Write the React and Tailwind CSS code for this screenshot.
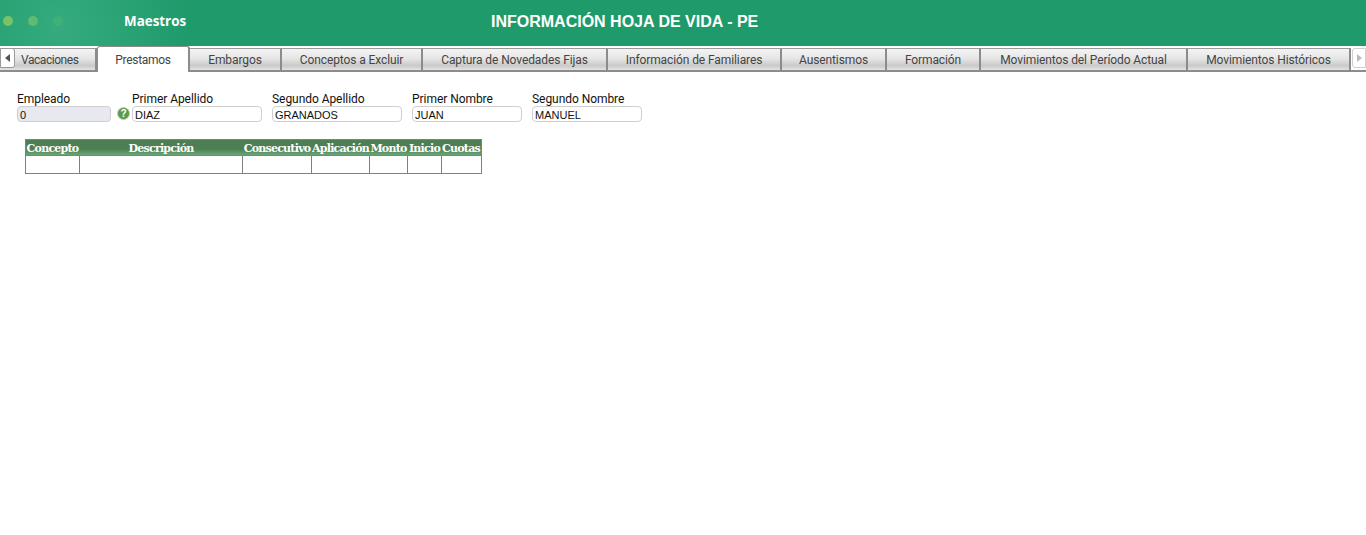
import React from 'react';

const tabs = [
  { name: 'Vacaciones', width: 'w-[97px]', pad: 'pl-[21px] justify-start', track: 'tracking-[-0.45px]' },
  { name: 'Prestamos', width: 'w-[93px]', active: true, track: 'tracking-[-0.3px]' },
  { name: 'Embargos', width: 'w-[92px]', track: 'tracking-[-0.1px]' },
  { name: 'Conceptos a Excluir', width: 'w-[141px]', track: 'tracking-[-0.1px]' },
  { name: 'Captura de Novedades Fijas', width: 'w-[185px]', track: 'tracking-[-0.1px]' },
  { name: 'Información de Familiares', width: 'w-[174px]', track: 'tracking-[-0.1px]' },
  { name: 'Ausentismos', width: 'w-[105px]', track: 'tracking-[-0.1px]' },
  { name: 'Formación', width: 'w-[94px]', track: 'tracking-[-0.1px]' },
  { name: 'Movimientos del Período Actual', width: 'w-[207px]', track: 'tracking-[-0.1px]' },
  { name: 'Movimientos Históricos', width: 'w-[163px]', track: 'tracking-[-0.1px]' },
];

const fields = [
  { label: 'Primer Apellido', value: 'DIAZ', width: 'w-[130px]' },
  { label: 'Segundo Apellido', value: 'GRANADOS', width: 'w-[130px]' },
  { label: 'Primer Nombre', value: 'JUAN', width: 'w-[110px]' },
  { label: 'Segundo Nombre', value: 'MANUEL', width: 'w-[110px]' },
];

const columns = [
  { name: 'Concepto', width: 'w-[54px]' },
  { name: 'Descripción', width: 'w-[163px]' },
  { name: 'Consecutivo', width: 'w-[69px]' },
  { name: 'Aplicación', width: 'w-[58px]' },
  { name: 'Monto', width: 'w-[38px]' },
  { name: 'Inicio', width: 'w-[34px]' },
  { name: 'Cuotas', width: 'w-[39px]' },
];

const Field = ({ label, value, width, disabled }) => (
  <div className={`${width} flex flex-col`}>
    <label className="h-[14px] text-[12px] leading-[14px] tracking-[-0.05px] text-[#111] font-['Roboto',sans-serif] whitespace-nowrap">{label}</label>
    <div className={`h-[16px] rounded-[4px] border border-[#cfcfcf] pl-[2px] pt-px text-[11px] leading-[15px] text-[#111] font-['Liberation_Sans',sans-serif] ${disabled ? 'bg-[#e8e8f0]' : 'bg-white'}`}>
      {value}
    </div>
  </div>
);

const App = () => {
  return (
    <div className="w-[1366px] h-[535px] bg-white overflow-hidden">
      {/* Header */}
      <div className="h-[46px] flex items-center bg-[radial-gradient(circle_at_60px_25px,#35ab7e_0,#1f9a6b_130px)]">
        <div className="flex gap-[15px] pl-[3px] pb-[5px]">
          <span className="w-[10px] h-[10px] rounded-full bg-[#79c267]" />
          <span className="w-[10px] h-[10px] rounded-full bg-[#5ebb6f]" />
          <span className="w-[10px] h-[10px] rounded-full bg-[#3fb077]" />
        </div>
        <div className="ml-[61px] w-[100px] pb-[4px] text-[13.4px] font-bold text-white font-['Open_Sans',sans-serif]">Maestros</div>
        <div className="ml-[267px] pb-[3px] text-[16px] font-bold text-white font-['Liberation_Sans',sans-serif] whitespace-nowrap">INFORMACIÓN HOJA DE VIDA - PE</div>
      </div>

      {/* Tabs */}
      <div className="relative h-[26px] flex items-start border-b-2 border-[#8c8c8c]">
        <div className="absolute left-0 top-[2px] z-10 w-[15px] h-[20px] flex items-center justify-center rounded-r-[3px] border border-[#9a9a9a] bg-white">
          <svg width="6" height="8" viewBox="0 0 6 8"><path d="M5 0 L0 4 L5 8 Z" fill="#555" /></svg>
        </div>
        {tabs.map((tab) => (
          <div
            key={tab.name}
            className={`${tab.width} ${tab.track} shrink-0 flex items-center text-[12px] text-[#444] font-['Roboto',sans-serif] whitespace-nowrap border-r-2 border-[#8c8c8c] ${tab.pad || 'justify-center'} ${
              tab.active
                ? 'relative z-10 h-[26px] pt-px bg-white rounded-t-[3px] border-t border-l'
                : 'h-[22px] mt-[2px] pt-px border-t border-t-[#999] bg-[linear-gradient(#f4f4f4,#e6e6e6_45%,#c9c9c9_80%,#e4e4e4)]'
            }`}
          >
            {tab.name}
          </div>
        ))}
        <div className="ml-px mt-[2px] w-[15px] h-[20px] flex items-center justify-center rounded-l-[3px] border border-[#cfcfcf] bg-white">
          <svg width="6" height="8" viewBox="0 0 6 8"><path d="M1 0 L6 4 L1 8 Z" fill="#bbb" /></svg>
        </div>
      </div>

      {/* Form */}
      <div className="flex items-end pt-[20px] pl-[17px]">
        <Field label="Empleado" value="0" width="w-[94px]" disabled />
        <div className="w-[19px] h-[16px] pt-px flex items-start justify-end">
          <span className="w-[13px] h-[13px] rounded-full bg-[#5c9a4e] border border-[#b5d6a8] flex items-center justify-center text-[10px] leading-none font-bold text-white font-['Liberation_Sans',sans-serif]">?</span>
        </div>
        <div className="ml-[2px] flex gap-[10px]">
          {fields.map((field) => (
            <Field key={field.label} {...field} />
          ))}
        </div>
      </div>

      {/* Table */}
      <div className="mt-[17px] ml-[25px] w-fit border border-[#808080]">
        <div className="flex h-[16px] border-b border-[#808080] bg-[linear-gradient(#4e7f54,#4e7f54_60%,#6aa577)]">
          {columns.map((col) => (
            <div key={col.name} className={`${col.width} pt-px pr-px text-center text-[11px] leading-[15px] font-bold text-white font-['DejaVu_Serif',serif] tracking-[-0.75px] whitespace-nowrap overflow-hidden`}>
              {col.name}
            </div>
          ))}
        </div>
        <div className="flex h-[17px]">
          {columns.map((col) => (
            <div key={col.name} className={`${col.width} border-r border-[#808080] last:border-r-0`} />
          ))}
        </div>
      </div>
    </div>
  );
};

export default App;
